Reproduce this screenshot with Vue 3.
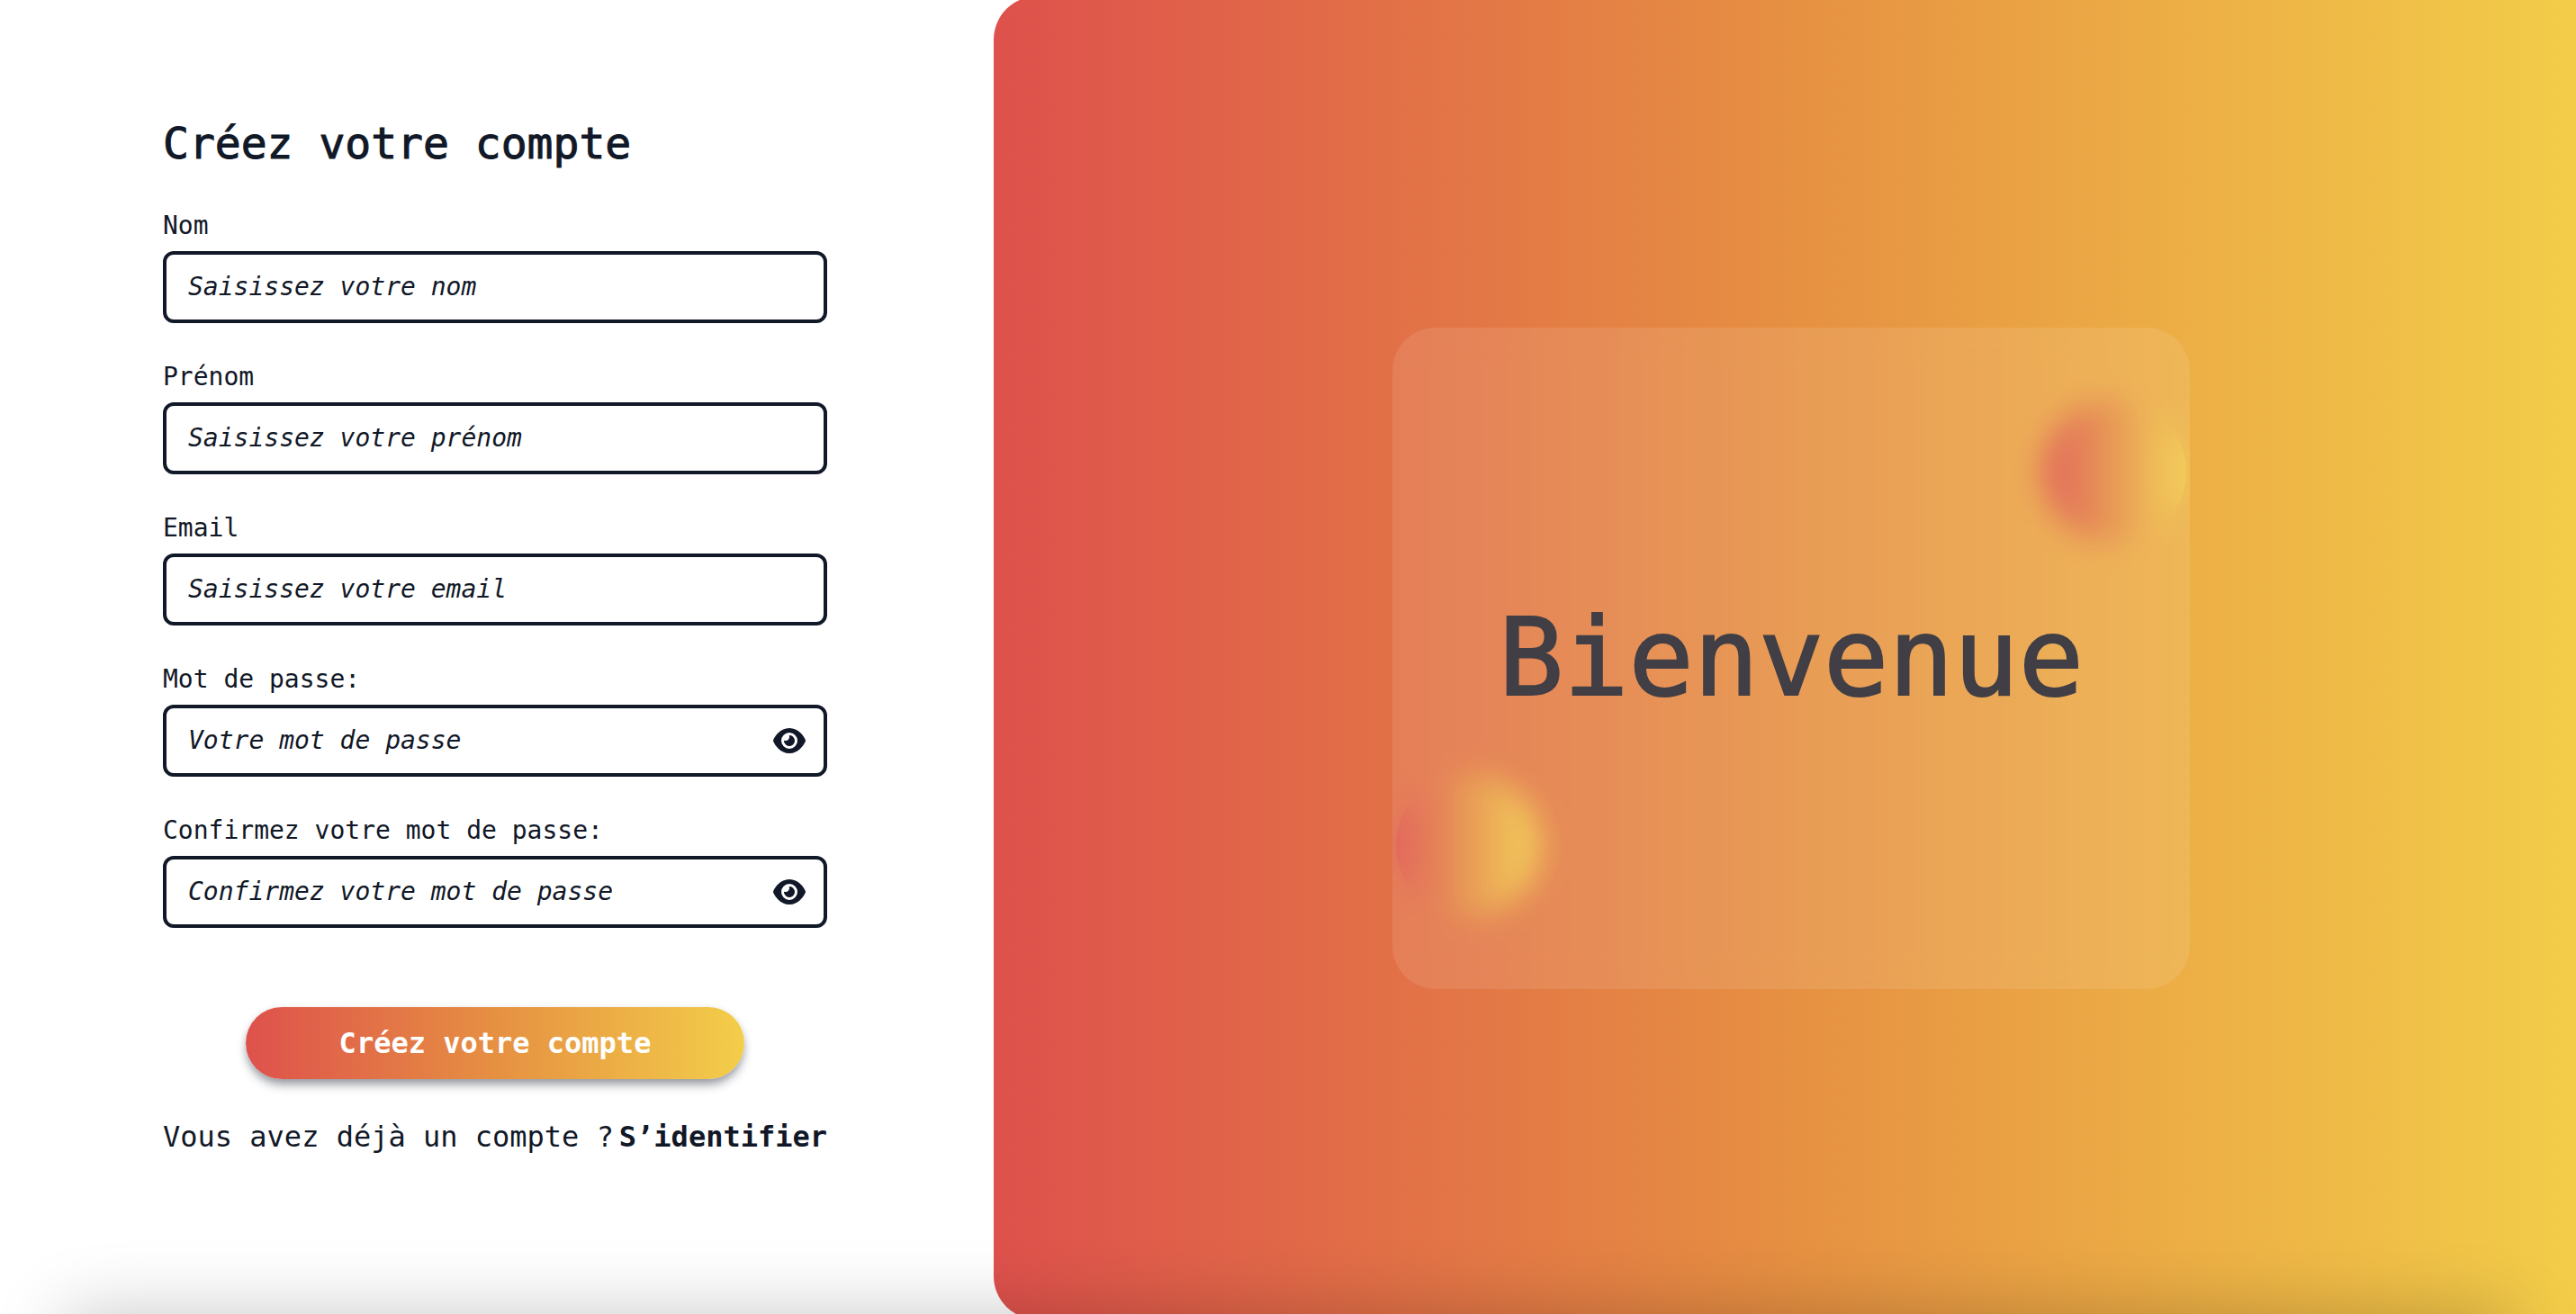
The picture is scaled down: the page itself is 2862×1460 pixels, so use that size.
<script setup>
import { ref } from 'vue'

const fields = ref([
  { id: 'nom', label: 'Nom', placeholder: 'Saisissez votre nom', type: 'text', secret: false, value: '' },
  { id: 'prenom', label: 'Prénom', placeholder: 'Saisissez votre prénom', type: 'text', secret: false, value: '' },
  { id: 'email', label: 'Email', placeholder: 'Saisissez votre email', type: 'email', secret: false, value: '' },
  { id: 'password', label: 'Mot de passe:', placeholder: 'Votre mot de passe', type: 'password', secret: true, value: '' },
  { id: 'confirm', label: 'Confirmez votre mot de passe:', placeholder: 'Confirmez votre mot de passe', type: 'password', secret: true, value: '' },
])

function toggle(field) {
  field.type = field.type === 'password' ? 'text' : 'password'
}
</script>

<template>
  <main class="page">
    <section class="signup">
      <form class="form" @submit.prevent>
        <h1 class="title">Créez votre compte</h1>
        <div class="fields">
          <div v-for="field in fields" :key="field.id" class="field">
            <label :for="field.id">{{ field.label }}</label>
            <div class="control">
              <input :id="field.id" v-model="field.value" :type="field.type" :placeholder="field.placeholder" />
              <button v-if="field.secret" type="button" class="eye" aria-label="Afficher le mot de passe" @click="toggle(field)">
                <svg viewBox="0 32 576 448" aria-hidden="true">
                  <path d="M288 32c-80.8 0-145.5 36.8-192.6 80.6C48.6 156 17.3 208 2.5 243.7c-3.3 7.9-3.3 16.7 0 24.6C17.3 304 48.6 356 95.4 399.4C142.5 443.2 207.2 480 288 480s145.5-36.8 192.6-80.6c46.8-43.5 78.1-95.4 93-131.1c3.3-7.9 3.3-16.7 0-24.6c-14.9-35.7-46.2-87.7-93-131.1C433.5 68.8 368.8 32 288 32zM144 256a144 144 0 1 1 288 0 144 144 0 1 1 -288 0zm144-64c0 35.3-28.7 64-64 64c-7.1 0-13.9-1.2-20.3-3.3c-5.5-1.8-11.9 1.6-11.7 7.4c.3 6.9 1.3 13.8 3.2 20.7c13.7 51.2 66.4 81.6 117.6 67.9s81.6-66.4 67.9-117.6c-11.1-41.5-47.8-69.4-88.6-71.1c-5.8-.2-9.2 6.1-7.4 11.7c2.1 6.4 3.3 13.2 3.3 20.3z" />
                </svg>
              </button>
            </div>
          </div>
        </div>
        <button type="submit" class="submit">Créez votre compte</button>
        <p class="signin">
          <span>Vous avez déjà un compte ?</span>
          <a href="#">S’identifier</a>
        </p>
      </form>
    </section>

    <section class="welcome">
      <div class="stage">
        <span class="orb orb-top"></span>
        <span class="orb orb-bottom"></span>
        <div class="glass">
          <p class="greeting">Bienvenue</p>
        </div>
      </div>
    </section>
  </main>
</template>

<style>
body {
  background: #fff;
}
</style>

<style scoped>
.page {
  --ink: #111827;
  --sunset: linear-gradient(90deg, #de514c 0%, #e69042 50%, #f3ce49 100%);
  position: relative;
  display: grid;
  grid-template-columns: minmax(0, 1104fr) minmax(0, 1758fr);
  min-height: 100vh;
  overflow: hidden;
  color: var(--ink);
  font-family: "DejaVu Sans Mono", "Liberation Mono", monospace;
}

/* soft shade rising from the bottom edge */
.page::after {
  content: "";
  position: absolute;
  top: 100%;
  left: 72px;
  right: 72px;
  height: 240px;
  box-shadow: 0 0 80px rgba(0, 0, 0, 0.22);
  pointer-events: none;
}

.signup {
  display: flex;
  justify-content: center;
  align-items: flex-start;
  padding: 127px 36px 0 32px;
}

.form {
  display: flex;
  flex-direction: column;
  width: 100%;
  max-width: 738px;
}

.title {
  margin: 0 0 40px;
  font-size: 48px;
  font-weight: 400;
  line-height: 64px;
  -webkit-text-stroke: 1px currentColor;
}

.fields {
  display: flex;
  flex-direction: column;
  gap: 40px;
}

.field {
  display: flex;
  flex-direction: column;
  gap: 8px;
}

.field label {
  font-size: 28px;
  line-height: 40px;
}

.control {
  display: flex;
  align-items: center;
  box-sizing: border-box;
  height: 80px;
  padding: 0 20px 0 24px;
  border: 4px solid var(--ink);
  border-radius: 12px;
}

.control input {
  flex: 1;
  min-width: 0;
  padding: 0;
  border: 0;
  outline: 0;
  background: transparent;
  color: var(--ink);
  font: 28px/40px "DejaVu Sans Mono", "Liberation Mono", monospace;
}

.control input::placeholder {
  color: var(--ink);
  font-style: italic;
  opacity: 1;
}

.eye {
  display: flex;
  padding: 0;
  border: 0;
  background: none;
  color: var(--ink);
  cursor: pointer;
}

.eye svg {
  width: 36px;
  height: 28px;
  fill: currentColor;
}

.submit {
  align-self: center;
  width: 75%;
  height: 80px;
  margin: 88px 0 40px;
  border: 0;
  border-radius: 40px;
  background: var(--sunset);
  box-shadow: 0 8px 12px -2px rgba(17, 24, 39, 0.4), 0 2px 8px rgba(17, 24, 39, 0.12);
  color: #fff;
  font: bold 32px/40px "DejaVu Sans Mono", "Liberation Mono", monospace;
  cursor: pointer;
}

.signin {
  display: flex;
  justify-content: space-between;
  margin: 0;
  font-size: 32px;
  line-height: 48px;
  white-space: nowrap;
}

.signin a {
  color: inherit;
  font-weight: 700;
  text-decoration: none;
}

/* the panel runs slightly past the window on three sides */
.welcome {
  display: flex;
  align-items: center;
  justify-content: center;
  margin: -4px -14px -6px 0;
  border-radius: 48px 0 0 48px;
  background: var(--sunset);
}

.stage {
  position: relative;
  width: 50%;
  height: 50%;
}

.orb {
  position: absolute;
  width: 160px;
  height: 160px;
  border-radius: 50%;
  background: var(--sunset);
}

.orb-top {
  top: 80px;
  right: 4px;
}

.orb-bottom {
  bottom: 80px;
  left: 4px;
}

.glass {
  position: relative;
  display: flex;
  align-items: center;
  justify-content: center;
  height: 100%;
  border-radius: 48px;
  background: rgba(255, 255, 255, 0.1);
  -webkit-backdrop-filter: blur(16px);
  backdrop-filter: blur(16px);
}

.greeting {
  margin: 0;
  color: #413f45;
  font-size: 120px;
  line-height: 144px;
  -webkit-text-stroke: 2px currentColor;
}
</style>
